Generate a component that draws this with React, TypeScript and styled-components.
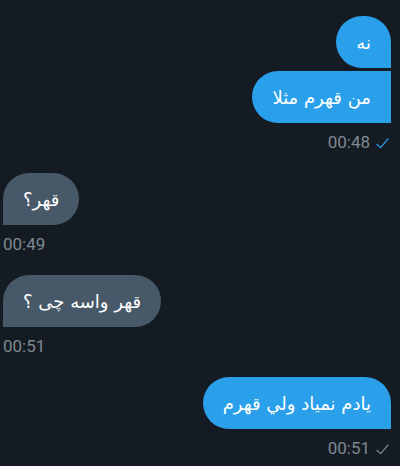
import React from 'react';
import styled, { createGlobalStyle } from 'styled-components';

type Side = 'in' | 'out';

type Message = {
  side: Side;
  texts: string[];
  time: string;
  read?: boolean;
};

const messages: Message[] = [
  { side: 'out', texts: ['نه', 'من قهرم مثلا'], time: '00:48', read: true },
  { side: 'in', texts: ['قهر؟'], time: '00:49' },
  { side: 'in', texts: ['قهر واسه چی ؟'], time: '00:51' },
  { side: 'out', texts: ['یادم نمیاد ولي قهرم'], time: '00:51' }
];

const radius = (side: Side, first: boolean) => {
  const r = 26;
  if (side === 'out') {
    return `${r}px ${first ? r : 0}px 0 ${r}px`;
  }
  return `${first ? r : 0}px ${r}px ${r}px 0`;
};

const CheckIcon: React.FC<{ read: boolean }> = ({ read }) => (
  <CheckSvg viewBox="0 0 14 12" width="13" height="11">
    <polyline
      points="1,7 5,10.5 13,1"
      fill="none"
      stroke={read ? '#2a9fea' : '#7c8691'}
      strokeWidth="1.4"
      strokeLinecap="round"
      strokeLinejoin="round"
    />
  </CheckSvg>
);

const App: React.FC = () => (
  <Root>
    <GlobalStyle />
    {messages.map((m, i) => (
      <Group key={i} side={m.side}>
        <Bubbles side={m.side}>
          {m.texts.map((t, j) => (
            <Bubble key={j} side={m.side} $radius={radius(m.side, j === 0)}>
              {t}
            </Bubble>
          ))}
        </Bubbles>
        <Meta side={m.side}>
          {m.time}
          {m.side === 'out' && <CheckIcon read={!!m.read} />}
        </Meta>
      </Group>
    ))}
  </Root>
);

const GlobalStyle = createGlobalStyle`
  html, body {
    margin: 0;
    padding: 0;
    background: #151b23;
  }
`;

const Root = styled.div`
  width: 400px;
  height: 466px;
  background: #151b23;
  padding-top: 16px;
  box-sizing: border-box;
  display: flex;
  flex-direction: column;
  gap: 21px;
  overflow: hidden;
`;

const Group = styled.div<{ side: Side }>`
  display: flex;
  flex-direction: column;
  align-items: ${({ side }) => (side === 'out' ? 'flex-end' : 'flex-start')};
  padding: ${({ side }) => (side === 'out' ? '0 9px 0 0' : '0 0 0 3px')};
`;

const Bubbles = styled.div<{ side: Side }>`
  display: flex;
  flex-direction: column;
  align-items: ${({ side }) => (side === 'out' ? 'flex-end' : 'flex-start')};
  gap: 3px;
`;

const Bubble = styled.div<{ side: Side; $radius: string }>`
  direction: rtl;
  height: 52px;
  box-sizing: border-box;
  display: flex;
  align-items: center;
  padding: 0 20px;
  border-radius: ${({ $radius }) => $radius};
  background: ${({ side }) => (side === 'out' ? '#2a9fea' : '#475868')};
  color: #ffffff;
  font-family: 'DejaVu Sans', 'Noto Sans', sans-serif;
  font-size: 18px;
`;

const Meta = styled.div<{ side: Side }>`
  display: flex;
  align-items: center;
  gap: 6px;
  margin-top: 9px;
  padding-right: ${({ side }) => (side === 'out' ? '2px' : '0')};
  font-family: Roboto, 'Liberation Sans', sans-serif;
  font-size: 17px;
  line-height: 20px;
  color: #7f8992;
`;

const CheckSvg = styled.svg`
  display: block;
  margin-top: 2px;
`;

export default App;
